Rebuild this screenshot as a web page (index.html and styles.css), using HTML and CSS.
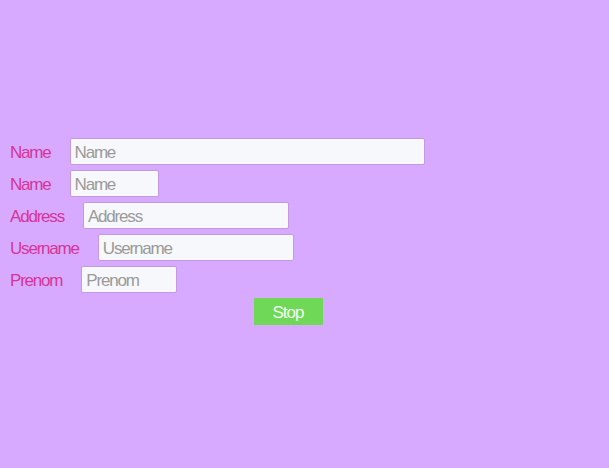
FILE: index.html
```html
<!DOCTYPE html>
<html>
<head>
<meta charset="utf-8">
<link rel="stylesheet" href="styles.css">
</head>
<body>
<form class="form">
  <div class="row"><label class="lbl">Name</label><input class="field w-name" placeholder="Name"></div>
  <div class="row"><label class="lbl">Name</label><input class="field w-name2" placeholder="Name"></div>
  <div class="row"><label class="lbl">Address</label><input class="field w-addr" placeholder="Address"></div>
  <div class="row"><label class="lbl">Username</label><input class="field w-user" placeholder="Username"></div>
  <div class="row"><label class="lbl">Prenom</label><input class="field w-pre" placeholder="Prenom"></div>
  <div class="actions"><button type="button" class="btn">Stop</button></div>
</form>
</body>
</html>
```
FILE: styles.css
```css
html, body {
  margin: 0;
  padding: 0;
  background: #d7aaff;
  height: 100%;
}
body {
  font-family: "Liberation Sans", Arial, sans-serif;
}
.form {
  padding: 138px 0 0 10px;
  width: 556px;
}
.row {
  display: flex;
  align-items: center;
  gap: 19px;
  margin-bottom: 5px;
}
.lbl {
  color: #d63598;
  font-size: 17px;
  letter-spacing: -1.2px;
  padding-top: 2px;
}
.field {
  box-sizing: border-box;
  height: 27px;
  border: 1px solid #c39ae0;
  border-radius: 2px;
  background: #f7f8fb;
  font-family: inherit;
  font-size: 17px;
  letter-spacing: -1.2px;
  padding: 2px 4px 0;
  color: #333;
}
.field::placeholder {
  color: #9a9a9a;
}
.w-name { width: 355px; }
.w-name2 { width: 89px; }
.w-addr { width: 206px; }
.w-user { width: 196px; }
.w-pre { width: 96px; }
.actions {
  display: flex;
  justify-content: center;
}
.btn {
  box-sizing: border-box;
  width: 69px;
  height: 27px;
  border: none;
  background: #6fd856;
  color: #f2fff0;
  font-family: inherit;
  font-size: 17px;
  letter-spacing: -1px;
  padding: 2px 0 0;
}
```
